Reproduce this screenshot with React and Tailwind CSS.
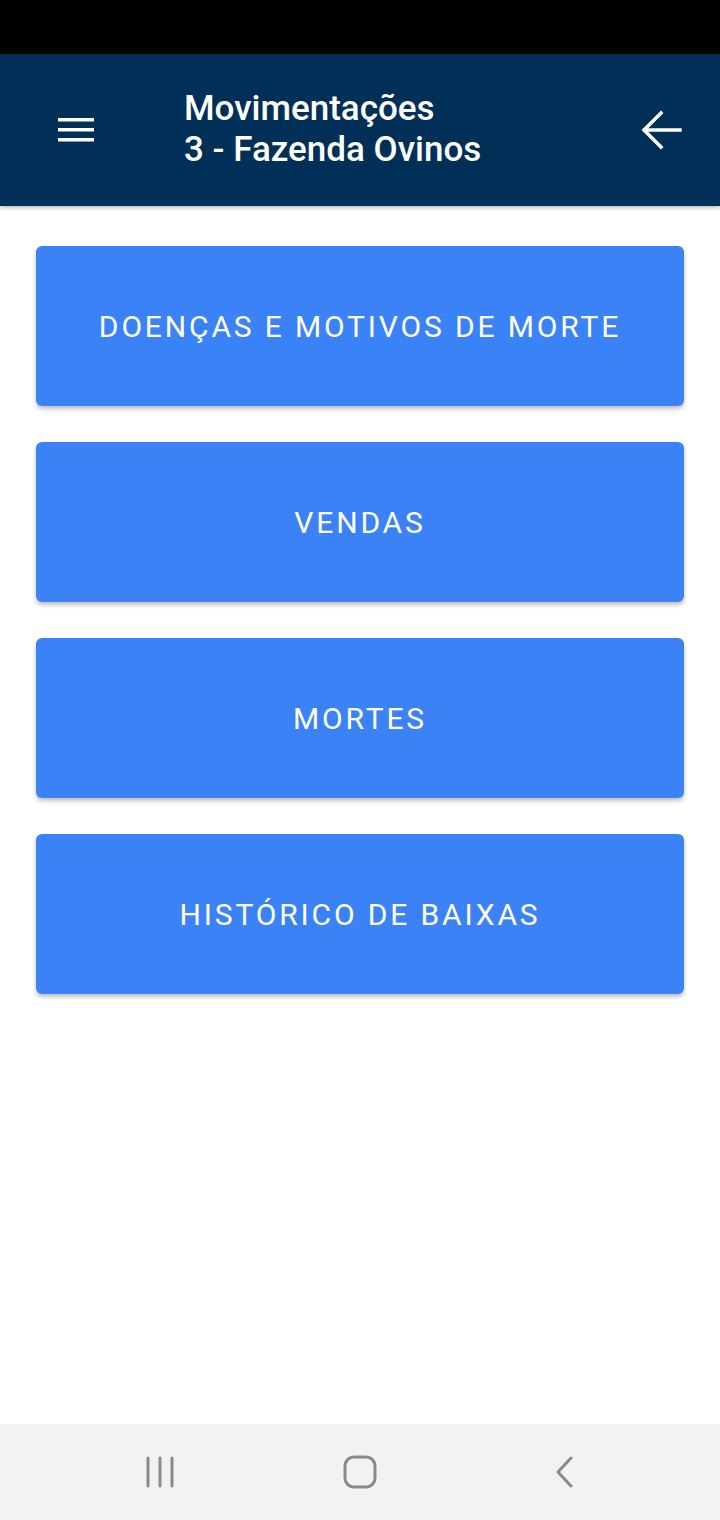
import React from "react";

const items = ["DOENÇAS E MOTIVOS DE MORTE", "VENDAS", "MORTES", "HISTÓRICO DE BAIXAS"];

const App = () => {
  return (
    <div className="w-[720px] h-[1520px] flex flex-col bg-white font-['Roboto',sans-serif]">
      {/* status bar */}
      <div className="h-[54px] bg-black shrink-0" />

      {/* app bar */}
      <div className="h-[152px] shrink-0 bg-[#003057] flex items-center shadow-[0_2px_4px_rgba(0,0,0,0.25)] relative z-10">
        <div className="w-[150px] pl-[58px] flex items-center">
          <svg width="36" height="24" viewBox="0 0 36 24">
            <rect x="0" y="0" width="36" height="3.5" fill="white" />
            <rect x="0" y="10" width="36" height="3.5" fill="white" />
            <rect x="0" y="20" width="36" height="3.5" fill="white" />
          </svg>
        </div>
        <div className="flex-1 pl-[34px] text-white text-[35px] leading-[41px] font-medium -mt-[2px]">
          <div>Movimentações</div>
          <div>3 - Fazenda Ovinos</div>
        </div>
        <div className="pr-[36px]">
          <svg width="44" height="44" viewBox="0 0 44 44" fill="none" stroke="white" strokeWidth="3.5" strokeLinecap="square">
            <path d="M40 22 H5" />
            <path d="M21 5 L4 22 L21 39" />
          </svg>
        </div>
      </div>

      {/* content */}
      <div className="flex-1 flex flex-col gap-[36px] px-[36px] pt-[40px]">
        {items.map((label) => (
          <button
            key={label}
            className="h-[160px] w-full rounded-[6px] bg-[#3b82f6] text-white text-[30px] tracking-[0.095em] shadow-[0_3px_4px_rgba(0,0,0,0.25)]"
          >
            {label}
          </button>
        ))}
      </div>

      {/* nav bar */}
      <div className="h-[96px] shrink-0 bg-[#f2f2f2] flex items-center pl-[145px]">
        <svg width="32" height="32" viewBox="0 0 32 32" stroke="#8a8a8a" strokeWidth="3" strokeLinecap="round">
          <line x1="3" y1="2" x2="3" y2="30" />
          <line x1="15" y1="2" x2="15" y2="30" />
          <line x1="27" y1="2" x2="27" y2="30" />
        </svg>
        <svg className="ml-[166px]" width="34" height="34" viewBox="0 0 34 34" fill="none" stroke="#8a8a8a" strokeWidth="3">
          <rect x="2" y="2" width="30" height="30" rx="9" />
        </svg>
        <svg className="ml-[174px]" width="24" height="32" viewBox="0 0 24 32" fill="none" stroke="#8a8a8a" strokeWidth="3" strokeLinecap="round" strokeLinejoin="round">
          <path d="M20 2 L7 16 L20 30" />
        </svg>
      </div>
    </div>
  );
};

export default App;
